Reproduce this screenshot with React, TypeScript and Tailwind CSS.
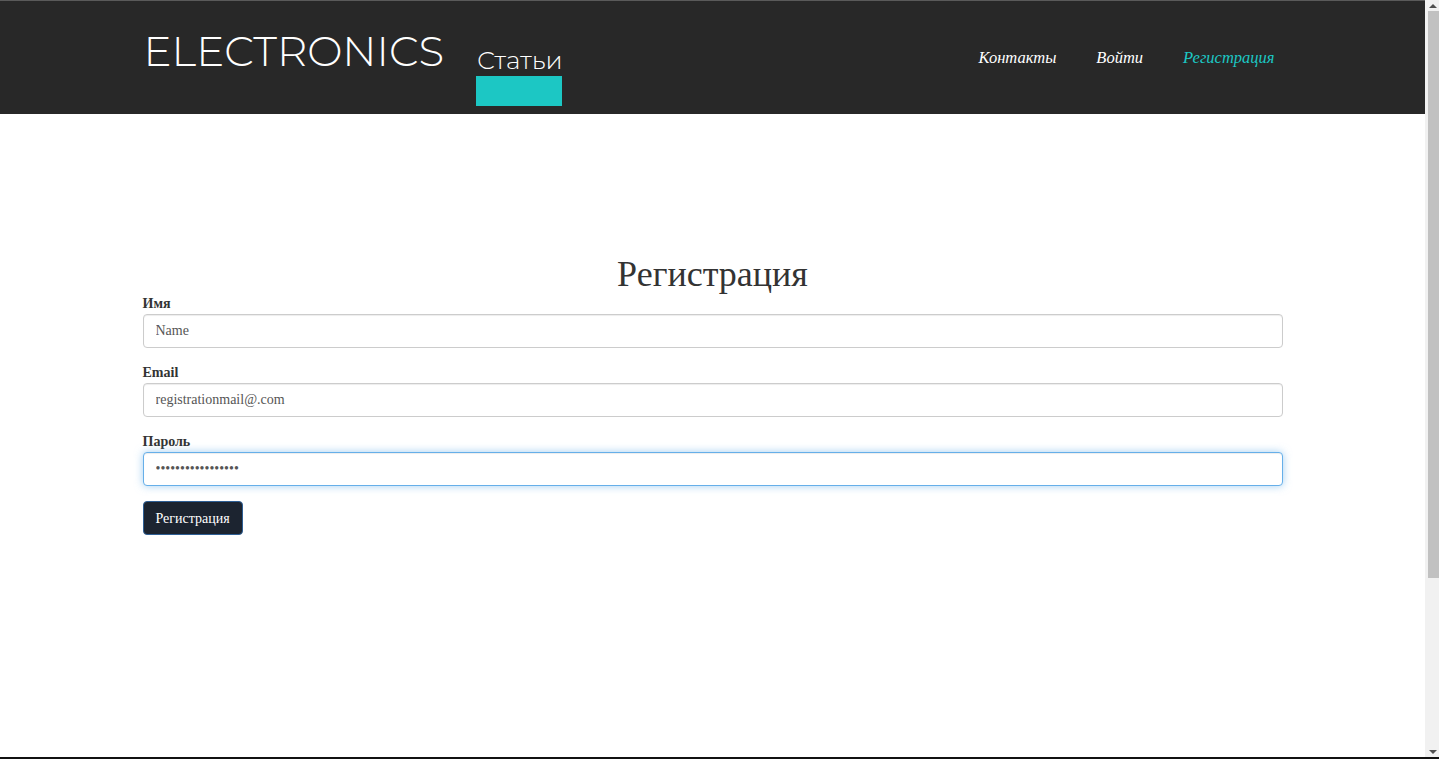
import React from "react";

export default function App() {
  return (
    <div className="w-[1439px] h-[759px] flex flex-col overflow-hidden bg-white">
      <div className="flex flex-row h-[757px]">
        <div className="flex-1 flex flex-col">
          <header className="h-[114px] bg-[#282828] border-t border-[#5a5a5a]">
            <div className="w-[1140px] mx-auto flex items-start">
              <div
                className="pl-[1px] pt-[23px] text-[42px] leading-[54px] font-light text-white"
                style={{ fontFamily: "Montserrat, Inter, 'Noto Sans', sans-serif" }}
              >
                ELECTRONICS
              </div>
              <div className="ml-[32px] pt-[44px] flex flex-col">
                <div
                  className="text-[25px] leading-[31px] text-white font-light px-[1px]"
                  style={{ fontFamily: "Montserrat, Inter, 'Noto Sans', sans-serif" }}
                >
                  Статьи
                </div>
                <div className="h-[30px] w-[86px] bg-[#1cc7c4]" />
              </div>
              <nav
                className="ml-auto mr-[8px] pt-[45px] flex gap-[40px] italic text-[16.5px] leading-[24px]"
                style={{ fontFamily: "'Liberation Serif', 'Times New Roman', serif" }}
              >
                <a className="text-white">Контакты</a>
                <a className="text-white">Войти</a>
                <a className="text-[#1cc7c4]">Регистрация</a>
              </nav>
            </div>
          </header>
          <main
            className="w-[1140px] mx-auto pt-[140px] text-[#333]"
            style={{ fontFamily: "'Liberation Serif', 'Times New Roman', serif" }}
          >
            <h1 className="text-center text-[36px] leading-[40px] h-[40px]">Регистрация</h1>
            <form className="flex flex-col">
              <div className="mb-[15px] flex flex-col">
                <label className="text-[14px] leading-[20px] font-bold">Имя</label>
                <input
                  readOnly
                  value="Name"
                  className="h-[34px] px-[12px] text-[14px] text-[#555] bg-white border border-[#ccc] rounded-[4px] outline-none shadow-[inset_0_1px_1px_rgba(0,0,0,0.075)]"
                />
              </div>
              <div className="mb-[15px] flex flex-col">
                <label className="text-[14px] leading-[20px] font-bold">Email</label>
                <input
                  readOnly
                  value="registrationmail@.com"
                  className="h-[34px] px-[12px] text-[14px] text-[#555] bg-white border border-[#ccc] rounded-[4px] outline-none shadow-[inset_0_1px_1px_rgba(0,0,0,0.075)]"
                />
              </div>
              <div className="mb-[15px] flex flex-col">
                <label className="text-[14px] leading-[20px] font-bold">Пароль</label>
                <input
                  readOnly
                  type="password"
                  value="passwordpassword1"
                  className="h-[34px] px-[12px] text-[14px] text-[#555] bg-white border border-[#66afe9] rounded-[4px] outline-none shadow-[inset_0_1px_1px_rgba(0,0,0,0.075),0_0_8px_rgba(102,175,233,0.6)]"
                />
              </div>
              <div>
                <button
                  type="button"
                  className="h-[34px] px-[12px] text-[14px] text-white bg-[#1c2430] border border-[#2e5f95] rounded-[4px]"
                >
                  Регистрация
                </button>
              </div>
            </form>
          </main>
        </div>
        <div className="w-[14px] bg-[#f1f1f1] flex flex-col items-end">
          <div className="h-[11px] w-full flex items-center justify-center pl-[1px]">
            <svg width="8" height="4" viewBox="0 0 8 4">
              <polygon points="0,4 8,4 4,0" fill="#505050" />
            </svg>
          </div>
          <div className="h-[567px] w-[11px] bg-[#c1c1c1]" />
          <div className="flex-1" />
          <div className="h-[11px] w-full flex items-center justify-center pl-[1px]">
            <svg width="8" height="4" viewBox="0 0 8 4">
              <polygon points="0,0 8,0 4,4" fill="#505050" />
            </svg>
          </div>
        </div>
      </div>
      <div className="h-[2px] bg-[#111]" />
    </div>
  );
}
